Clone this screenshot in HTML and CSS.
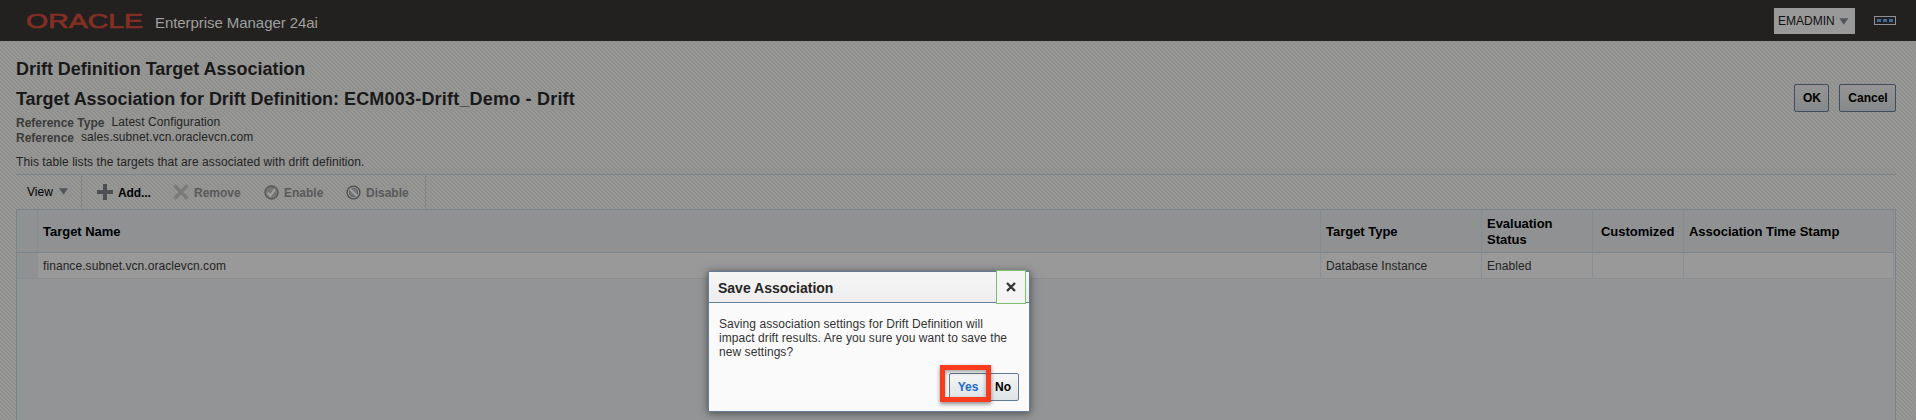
FILE: index.html
```html
<!DOCTYPE html>
<html lang="en">
<head>
<meta charset="utf-8">
<title>Drift Definition Target Association</title>
<link rel="stylesheet" href="styles.css">
</head>
<body>
<header class="topbar">
  <svg class="logo" width="122" height="30" viewBox="0 0 122 30" role="img" aria-label="Oracle"><text x="0" y="22" textLength="117" lengthAdjust="spacingAndGlyphs">ORACLE</text></svg>
  <span class="product">Enterprise Manager 24ai</span>
  <button class="user">EMADMIN <svg width="10" height="7" viewBox="0 0 10 7"><path d="M0.3 0.3h9L4.8 6.8z"/></svg></button>
  <svg class="dots" width="22" height="9" viewBox="0 0 22 9"><rect class="frame" x=".5" y=".5" width="21" height="8"/><path d="M3 3h4v3H3zM9 3h4v3H9zM15 3h4v3h-4z"/></svg>
</header>
<main class="page">
  <h1 class="title">Drift Definition Target Association</h1>
  <div class="subhead">
    <h2 class="title">Target Association for Drift Definition: <span class="name">ECM003-Drift_Demo - Drift</span></h2>
    <div class="actions"><button class="btn dim ok">OK</button><button class="btn dim cancel">Cancel</button></div>
  </div>
  <dl class="facts">
    <div><dt>Reference Type</dt><dd>Latest Configuration</dd></div>
    <div><dt>Reference</dt><dd>sales.subnet.vcn.oraclevcn.com</dd></div>
  </dl>
  <p class="hint">This table lists the targets that are associated with drift definition.</p>
  <div class="toolbar">
    <div class="view">View <svg width="9" height="7" viewBox="0 0 9 7"><path d="M0 .3h9L4.5 6.8z"/></svg></div>
    <div class="tools">
      <span class="tool add"><svg width="16" height="16" viewBox="0 0 16 16"><path d="M6 0h4v6h6v4h-6v6H6v-6H0V6h6z" fill="#4c5052"/></svg><span>Add...</span></span>
      <span class="tool remove"><svg width="16" height="16" viewBox="0 0 16 16"><path d="M1.5 1.5l13 13M14.5 1.5l-13 13" stroke="#7b7b7b" stroke-width="3.6"/></svg><span>Remove</span></span>
      <span class="tool enable"><svg width="15" height="15" viewBox="0 0 15 15"><circle cx="7.5" cy="7.5" r="6.5" fill="#777" stroke="#555" stroke-width="1.3"/><path d="M3.7 7.8l2.6 2.8L11 4.3" fill="none" stroke="#a2a2a2" stroke-width="2"/></svg><span>Enable</span></span>
      <span class="tool disable"><svg width="15" height="15" viewBox="0 0 15 15"><circle cx="7.5" cy="7.5" r="6.4" fill="#9a9a9a" stroke="#4c4c4c" stroke-width="1.3"/><circle cx="7.5" cy="7.5" r="4.1" fill="#777" stroke="#5c5c5c" stroke-width="1"/><path d="M4 4l7 7" stroke="#a2a2a2" stroke-width="2"/></svg><span>Disable</span></span>
    </div>
  </div>
  <div class="table">
    <div class="row head"><span></span><span>Target Name</span><span>Target Type</span><span>Evaluation<br>Status</span><span class="center">Customized</span><span>Association Time Stamp</span></div>
    <div class="row data"><span></span><span>finance.subnet.vcn.oraclevcn.com</span><span>Database Instance</span><span>Enabled</span><span></span><span></span></div>
  </div>
</main>
<div class="dialog" role="dialog">
  <div class="dialog-head"><span>Save Association</span>
    <button class="close" aria-label="Close"><svg width="10" height="10" viewBox="0 0 10 10"><path d="M1 1l8 8M9 1L1 9" stroke="#333" stroke-width="2.3"/></svg></button>
  </div>
  <p class="message">Saving association settings for Drift Definition will<br>impact drift results. Are you sure you want to save the<br>new settings?</p>
  <div class="choices"><button class="btn yes">Yes</button><button class="btn no">No</button></div>
  <div class="marker"></div>
</div>
</body>
</html>
```
FILE: styles.css
```css
* { box-sizing: border-box; }
body {
  margin: 0; width: 1916px; height: 420px; overflow: hidden;
  font: 12px/14px "Liberation Sans", Arial, sans-serif; color: #242424;
  background: repeating-linear-gradient(45deg, #979796 0 1.414px, #8f8f8e 1.414px 2.828px);
}
button { font: inherit; margin: 0; padding: 0; border-radius: 0; }
svg { display: block; flex: none; }
.topbar { height: 41px; background: #23211f; display: flex; align-items: center; padding: 0 20px 0 26px; }
.logo { margin-top: 1px; }
.logo text { font: 21px "Liberation Sans", Arial, sans-serif; fill: #842f24; stroke: #842f24; stroke-width: .7px; }
.product { font-size: 15px; line-height: 20px; color: #a09f9e; margin: 5px 0 0 7px; letter-spacing: -.06px; white-space: nowrap; }
.user { margin: 1px 19px 0 auto; width: 81px; height: 26px; border: 0; background: #999; color: #101010; display: flex; align-items: center; justify-content: space-between; padding: 0 6px 0 4px; }
.user path, .view path { fill: #4f565c; }
.dots .frame { fill: none; stroke: #8c9298; }
.dots path { fill: #436b97; }
.page { padding: 17px 20px 0 16px; height: 379px; display: flex; flex-direction: column; }
.title { margin: 0; font-size: 18px; line-height: 22px; font-weight: bold; letter-spacing: -.02px; color: #191919; white-space: nowrap; }
.subhead { display: flex; justify-content: space-between; margin-top: 4px; height: 31px; }
.subhead .title { padding-top: 4px; letter-spacing: -.05px; }
.name { letter-spacing: .2px; }
.actions { display: flex; gap: 10px; }
.btn { height: 28px; border: 1px solid #627b92; border-radius: 2px; background: linear-gradient(#f4f5f6, #dfe4e8); font-weight: bold; color: #000; }
.dim { border-color: #3f4e5c; background: linear-gradient(#949494, #86898b); }
.ok { width: 35px; padding-left: 1px; }
.cancel { width: 57px; padding-left: 1px; }
.facts { margin: 0; }
.facts div { display: flex; height: 15px; }
.facts dt { font-weight: bold; color: #3b3b3b; padding-top: 1px; }
.facts dd { margin: 0 0 0 7px; letter-spacing: .07px; }
.hint { margin: 10px 0 5px; letter-spacing: .07px; }
.toolbar { height: 35px; border-top: 1px solid #7c848c; display: flex; color: #000; flex: none; }
.view { width: 66px; border-right: 1px solid #7f868c; display: flex; align-items: center; gap: 6px; padding: 0 0 1px 11px; }
.tools { width: 344px; border-right: 1px solid #7f868c; display: flex; align-items: center; padding-left: 15px; font-weight: bold; color: #595959; }
.tool { display: flex; align-items: center; gap: 5px; flex: none; }
.tool span { padding-top: 2px; }
.add { color: #000; width: 76px; letter-spacing: -.1px; }
.remove { width: 91px; }
.enable { width: 82px; }
.table { flex: 1; border: 1px solid #7a848d; border-bottom: 0; background: #929496; padding-right: 1px; }
.row { display: grid; grid-template-columns: 21px 1283px 161px 111px 91px 1fr; }
.row span { display: flex; align-items: center; padding-left: 5px; border-right: 1px solid #848b91; border-bottom: 1px solid #7a848d; }
.head { height: 43px; background: #8f9193; font-size: 13px; line-height: 16px; font-weight: bold; letter-spacing: -.02px; color: #000; }
.head span { padding-top: 2px; }
.head .center { padding-left: 8px; }
.data { height: 26px; background: #999; letter-spacing: .07px; }
.row.data span { border-color: #8b8f92; }
.data span:first-child { background: #8f9193; }
.dialog { position: absolute; left: 708px; top: 271px; width: 322px; height: 141px; border: 1px solid #627b96; background: #fafafa; box-shadow: 0 1px 8px rgba(0,0,0,.5); color: #333; }
.dialog-head { height: 31px; border-bottom: 1px solid #627f9c; background: linear-gradient(#f6f6f6, #ededed); display: flex; align-items: flex-start; justify-content: space-between; padding: 0 3px 0 9px; font-size: 14px; line-height: 32px; font-weight: bold; color: #262626; }
.close { width: 30px; height: 34px; margin-top: -2px; border: 1px solid #7dbe70; background: #f4f4f4; display: flex; align-items: center; justify-content: center; }
.message { margin: 14px 0 0 10px; letter-spacing: .06px; white-space: nowrap; }
.choices { display: flex; gap: 1px; justify-content: flex-end; margin: 14px 10px 0 0; }
.yes { width: 38px; color: #1d69cc; }
.no { width: 31px; padding-right: 1px; }
.marker { position: absolute; left: 231px; top: 93px; width: 51px; height: 37px; border: 5px solid #fb3b1e; box-shadow: 0 2px 4px rgba(0,0,0,.45), inset 0 2px 4px rgba(0,0,0,.35); }
```
